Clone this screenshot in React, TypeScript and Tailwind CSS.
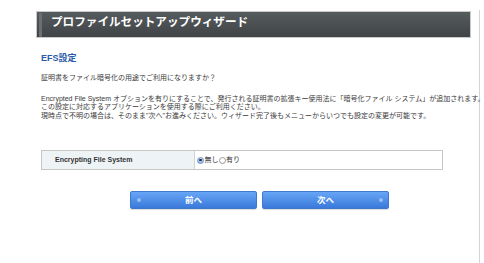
import React, { useState } from "react";

const font = { fontFamily: '"Liberation Sans", "Noto Sans CJK JP", sans-serif' };

function Grip() {
    return (
        <div
            className="w-[3px] h-[24px] ml-[2px] mt-[1px] rounded-[1px] bg-[#6b6f72]"
            style={{ backgroundImage: "radial-gradient(#9a9ea0 0.6px, transparent 0.7px)", backgroundSize: "2px 2px" }}
        />
    );
}

function NavButton({ label, side }: { label: string; side: "left" | "right" }) {
    return (
        <button className="relative w-[127px] h-[18px] rounded-[2px] border border-[#3f78cc] bg-gradient-to-b from-[#67a6f6] to-[#3a79da] text-white text-[8.5px] font-bold flex items-center justify-center shadow-[0_1px_1px_rgba(0,0,0,0.15)]">
            <span
                className={
                    side === "left"
                        ? "absolute left-[6px] top-[6px] w-[4px] h-[4px] rounded-[1px] bg-[#9cc4f7] border border-[#7fb0f0]"
                        : "absolute right-[5px] top-[6px] w-[4px] h-[4px] rounded-[1px] bg-[#9cc4f7] border border-[#7fb0f0]"
                }
            />
            {label}
        </button>
    );
}

export default function App() {
    const [efs, setEfs] = useState("none");

    return (
        <div className="w-[484px] h-[263px] bg-white overflow-hidden text-[#333]" style={font}>
            <div className="ml-[36px] mt-[10px] w-[444px] h-[253px] border-r border-[#d4d4d4] pt-[1px]">
                {/* header bar */}
                <div className="w-[435px] h-[27px] border border-[#c9c9c9] bg-gradient-to-b from-[#565b5e] to-[#404446] flex items-start">
                    <Grip />
                    <h1 className="ml-[9px] mt-[2px] text-white text-[11.6px] font-bold leading-[16px] whitespace-nowrap">
                        プロファイルセットアップウィザード
                    </h1>
                </div>

                <div className="pl-[5px]">
                    <h2 className="mt-[14px] text-[9px] font-bold text-[#2b5ba6] leading-[12px]">EFS設定</h2>

                    <div className="mt-[10px] text-[7px] leading-[8.5px] whitespace-nowrap text-[#3a3a3a]">
                        <p>証明書をファイル暗号化の用途でご利用になりますか？</p>
                        <p className="mt-[12px]">
                            Encrypted File System オプションを有りにすることで、発行される証明書の拡張キー使用法に「暗号化ファイル システム」が追加されます。
                        </p>
                        <p>この設定に対応するアプリケーションを使用する際にご利用ください。</p>
                        <p>現時点で不明の場合は、そのまま"次へ"お進みください。ウィザード完了後もメニューからいつでも設定の変更が可能です。</p>
                    </div>

                    {/* option table */}
                    <div className="mt-[30px] w-[402px] h-[20px] border border-[#c6c6c6] flex">
                        <div className="w-[153px] bg-[#eef3f6] border-r border-[#d2d2d2] flex items-center pl-[13px] text-[7px] font-bold text-[#333]">
                            Encrypting File System
                        </div>
                        <div className="flex-1 flex items-center pl-[2px] text-[7px] text-[#333]">
                            <label className="flex items-center" onClick={() => setEfs("none")}>
                                <span className="w-[7px] h-[7px] rounded-full border border-[#6f8fbf] bg-gradient-to-b from-[#cfe0f7] to-[#8fb5ea] flex items-center justify-center">
                                    {efs === "none" && <span className="w-[2.5px] h-[2.5px] rounded-full bg-[#1d2e4a]" />}
                                </span>
                                <span className="ml-[0.5px]">無し</span>
                            </label>
                            <label className="flex items-center" onClick={() => setEfs("yes")}>
                                <span className="w-[7px] h-[7px] rounded-full border border-[#9a9a9a] bg-white flex items-center justify-center">
                                    {efs === "yes" && <span className="w-[2.5px] h-[2.5px] rounded-full bg-[#1d2e4a]" />}
                                </span>
                                <span className="ml-[0.5px]">有り</span>
                            </label>
                        </div>
                    </div>

                    {/* navigation */}
                    <div className="mt-[21px] ml-[89px] flex gap-[5px]">
                        <NavButton label="前へ" side="left" />
                        <NavButton label="次へ" side="right" />
                    </div>
                </div>
            </div>
        </div>
    );
}
